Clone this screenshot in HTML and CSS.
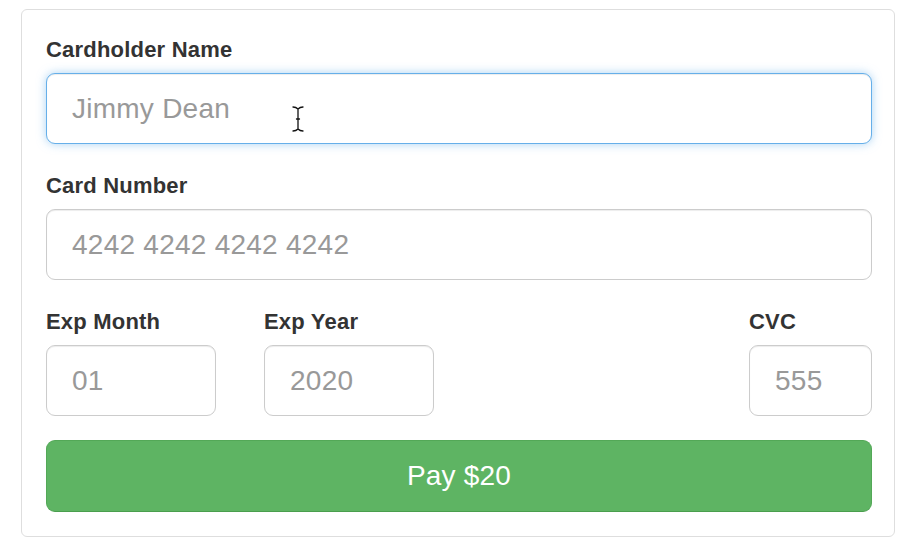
FILE: index.html
```html
<!DOCTYPE html>
<html lang="en">
<head>
<meta charset="utf-8">
<title>Payment</title>
<link rel="stylesheet" href="styles.css">
</head>
<body>
<form class="card">
  <div class="group">
    <label class="label">Cardholder Name</label>
    <input class="field field-focus" type="text" placeholder="Jimmy Dean">
  </div>
  <div class="group">
    <label class="label">Card Number</label>
    <input class="field" type="text" placeholder="4242 4242 4242 4242">
  </div>
  <div class="row group-last">
    <div class="col col-month">
      <label class="label">Exp Month</label>
      <input class="field" type="text" placeholder="01">
    </div>
    <div class="col col-year">
      <label class="label">Exp Year</label>
      <input class="field" type="text" placeholder="2020">
    </div>
    <div class="col col-cvc">
      <label class="label">CVC</label>
      <input class="field" type="text" placeholder="555">
    </div>
  </div>
  <button class="pay" type="button">Pay $20</button>
</form>
<svg class="cursor" width="16" height="30" viewBox="0 0 16 30" aria-hidden="true">
  <g fill="none" stroke-linecap="round">
    <path d="M3 3 Q6 3 8 5 Q10 3 13 3 M8 5 V25 M3 27 Q6 27 8 25 Q10 27 13 27 M6.5 15 H9.5" stroke="#fff" stroke-width="3"/>
    <path d="M3 3 Q6 3 8 5 Q10 3 13 3 M8 5 V25 M3 27 Q6 27 8 25 Q10 27 13 27 M6.5 15 H9.5" stroke="#111" stroke-width="1.3"/>
  </g>
</svg>
</body>
</html>
```
FILE: styles.css
```css
html, body {
  margin: 0;
  padding: 0;
  background: #fff;
}
body {
  font-family: "Liberation Sans", Arial, "Helvetica Neue", Helvetica, sans-serif;
  color: #333;
  position: relative;
  width: 903px;
  height: 552px;
  overflow: hidden;
}
.card {
  box-sizing: border-box;
  width: 874px;
  margin: 9px 0 0 21px;
  padding: 25px 22px 24px 24px;
  border: 1px solid #dedede;
  border-radius: 6px;
  display: flex;
  flex-direction: column;
}
.group {
  display: flex;
  flex-direction: column;
  margin-bottom: 27px;
}
.label {
  display: block;
  font-size: 22px;
  font-weight: bold;
  line-height: 30px;
  letter-spacing: 0.2px;
  margin-bottom: 8px;
  color: #333;
}
.field {
  box-sizing: border-box;
  display: block;
  width: 100%;
  height: 71px;
  margin: 0;
  padding: 0 24px 0 25px;
  font-family: "Liberation Sans", Arial, sans-serif;
  font-size: 28px;
  letter-spacing: 0.25px;
  color: #555;
  background: #fff;
  border: 1px solid #cccccc;
  border-radius: 9px;
  box-shadow: inset 0 1px 1px rgba(0, 0, 0, 0.075);
  outline: none;
}
.field::placeholder {
  color: #999;
  opacity: 1;
}
.field-focus {
  border-color: #66afe9;
  box-shadow: inset 0 1px 1px rgba(0, 0, 0, 0.075), 0 0 10px rgba(102, 175, 233, 0.55);
}
.row {
  display: flex;
  margin-bottom: 24px;
}
.col {
  display: flex;
  flex-direction: column;
}
.col-month {
  width: 170px;
  margin-right: 48px;
}
.col-year {
  width: 170px;
}
.col-cvc {
  width: 123px;
  margin-left: auto;
}
.pay {
  display: block;
  width: 100%;
  height: 72px;
  margin: 0;
  padding: 0;
  font-family: "Liberation Sans", Arial, sans-serif;
  font-size: 28px;
  letter-spacing: 0.2px;
  color: #fff;
  background: #5eb463;
  border: 1px solid #53a857;
  border-bottom-color: #4a9e4e;
  border-radius: 9px;
  cursor: pointer;
}
.cursor {
  position: absolute;
  left: 290px;
  top: 104px;
}
```
